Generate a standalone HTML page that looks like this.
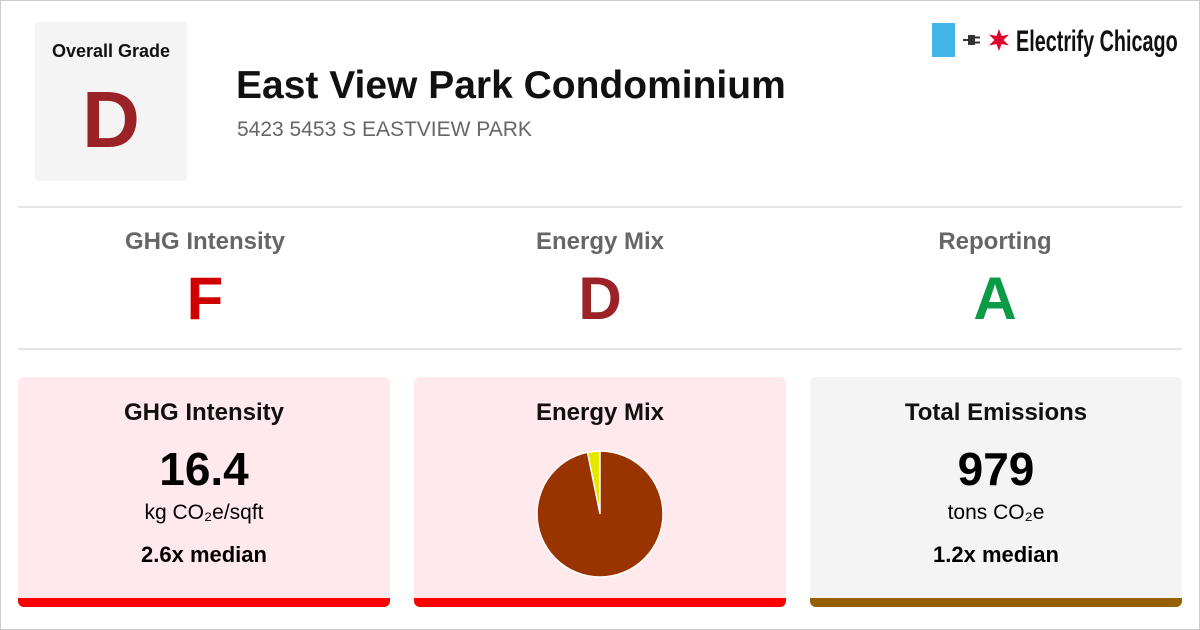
<!DOCTYPE html>
<html><head><style>
body{margin:0;width:1200px;height:630px;background:#fff;font-family:"Liberation Sans",sans-serif;position:relative;overflow:hidden}
.frame{position:absolute;left:0;top:0;width:1198px;height:628px;border:1px solid #ccc}
.abs{position:absolute}
.grade{left:35px;top:22px;width:152px;height:159px;background:#f4f4f4;border-radius:4px;text-align:center}
.hr{left:18px;width:1164px;height:2px;background:#e6e6e6}
.col{width:380px;text-align:center}
.card{top:377px;width:372px;height:230px;border-radius:6px;text-align:center;overflow:hidden}
.card .bar{position:absolute;left:0;bottom:0;width:100%;height:9px}
.card h3{margin:22px 0 0;font-size:24px;font-weight:bold;color:#111}
.big{font-size:46px;font-weight:bold;margin-top:16px;line-height:52px}
.unit{font-size:21px;margin-top:6px}
.med{font-size:22px;font-weight:bold;margin-top:17px}
</style></head><body>
<div class="frame"></div>
<div class="abs grade"><div style="font-size:18px;font-weight:bold;margin-top:19px;color:#111">Overall Grade</div><div style="font-size:80px;font-weight:bold;color:#9b2226;line-height:80px;margin-top:18px">D</div></div>
<div class="abs" style="left:236px;top:64px;font-size:39px;font-weight:bold;color:#111">East View Park Condominium</div>
<div class="abs" style="left:237px;top:118px;font-size:21px;color:#666">5423 5453 S EASTVIEW PARK</div>
<div class="abs" style="left:932px;top:23px;width:23px;height:34px;background:#41b6e6"></div>
<svg class="abs" style="left:963px;top:33px" width="22" height="14" viewBox="0 0 22 14"><path d="M0 6h5v2H0z M5 2h7v10H5z M12 3.5h5v2h-5z M12 8.5h5v2h-5z" fill="#333"/></svg>
<svg class="abs" style="left:988px;top:28px" width="22" height="24" viewBox="-11 -12 22 24"><path d="M0-11 2.5-4 10-5.5 4.5 0 10 5.5 2.5 4 0 11-2.5 4-10 5.5-4.5 0-10-5.5-2.5-4z" fill="#e4002b"/></svg>
<div class="abs" style="left:1016px;top:25px;font-size:30px;font-weight:bold;color:#111;transform:scaleX(0.66);transform-origin:left top;white-space:nowrap">Electrify Chicago</div>
<div class="abs hr" style="top:206px"></div>
<div class="abs hr" style="top:348px"></div>
<div class="abs col" style="left:15px;top:228px"><div style="font-size:24px;font-weight:bold;color:#666">GHG Intensity</div><div style="font-size:60px;font-weight:bold;color:#d00000;margin-top:8px">F</div></div>
<div class="abs col" style="left:410px;top:228px"><div style="font-size:24px;font-weight:bold;color:#666">Energy Mix</div><div style="font-size:60px;font-weight:bold;color:#9b2226;margin-top:8px">D</div></div>
<div class="abs col" style="left:805px;top:228px"><div style="font-size:24px;font-weight:bold;color:#666">Reporting</div><div style="font-size:60px;font-weight:bold;color:#0b9b47;margin-top:8px">A</div></div>
<div class="abs card" style="left:18px;background:#ffe9ec"><h3>GHG Intensity</h3><div class="big">16.4</div><div class="unit">kg CO₂e/sqft</div><div class="med">2.6x median</div><div class="bar" style="background:#f00"></div></div>
<div class="abs card" style="left:414px;background:#ffe9ec"><h3>Energy Mix</h3>
<svg style="position:absolute;left:121px;top:72px" width="130" height="130" viewBox="-65 -65 130 130"><circle r="63" fill="#993300" stroke="#fff" stroke-width="1.5"/><path d="M0 0 L0-63 A63 63 0 0 0 -12.5 -61.7Z" fill="#e6e600" stroke="#fff" stroke-width="1.5"/></svg>
<div class="bar" style="background:#f00"></div></div>
<div class="abs card" style="left:810px;background:#f4f4f4"><h3>Total Emissions</h3><div class="big">979</div><div class="unit">tons CO₂e</div><div class="med">1.2x median</div><div class="bar" style="background:#946000"></div></div>
</body></html>
